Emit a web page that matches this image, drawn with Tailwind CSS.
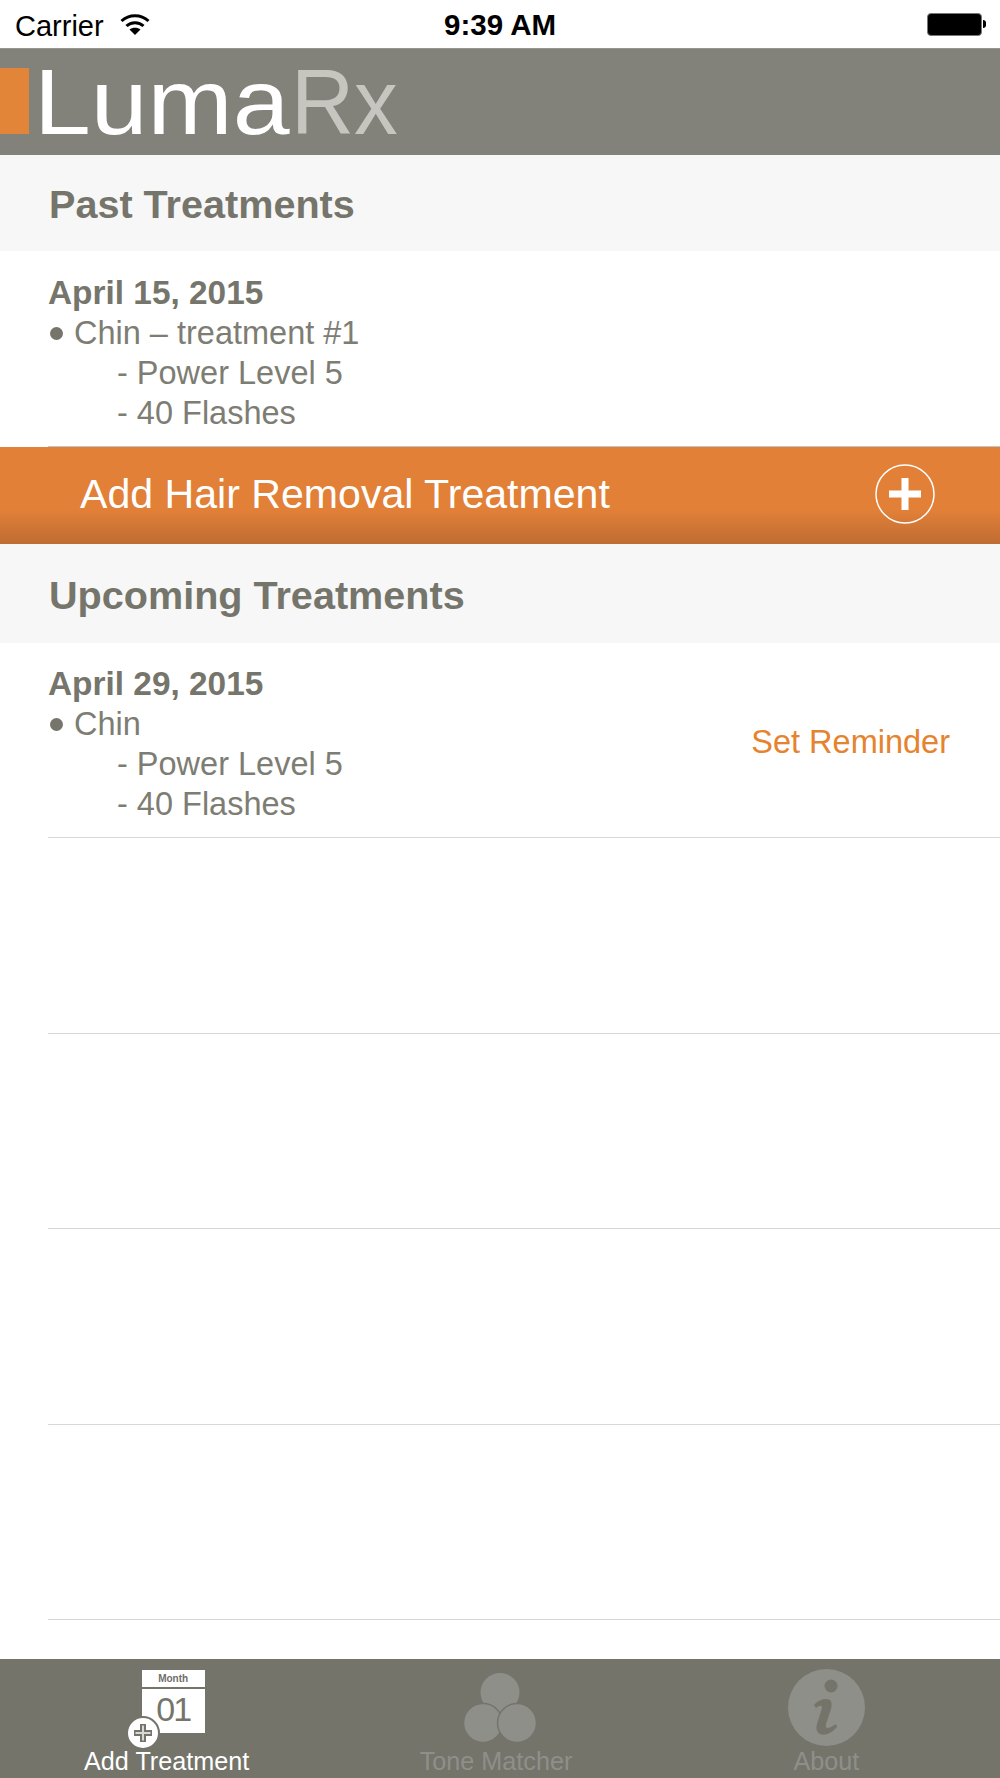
<!DOCTYPE html>
<html lang="en">
<head>
    <meta charset="UTF-8">
    <title>LumaRx</title>
    <script src="https://cdn.jsdelivr.net/npm/@tailwindcss/browser@4"></script>
</head>
<body class="bg-white font-['Liberation_Sans',sans-serif] text-[#7d7d74]">
<div class="w-[1000px] h-[1778px] flex flex-col overflow-hidden">

    <!-- status bar -->
    <div class="h-[48px] flex items-center justify-between relative text-black pl-[15px] pr-[14px]">
        <div class="flex items-center gap-[16px]">
            <span class="text-[29px] leading-[34px] mt-[4px]">Carrier</span>
            <svg width="30" height="23" viewBox="0 0 30 23">
                <path d="M1.5 8 C9 1 21 1 28.5 8" fill="none" stroke="black" stroke-width="3"/>
                <path d="M6.5 13 C11 8.5 19 8.5 23.5 13" fill="none" stroke="black" stroke-width="3"/>
                <path d="M9.5 16.5 C12.5 14 17.5 14 20.5 16.5 L15 22 Z" fill="black"/>
            </svg>
        </div>
        <span class="absolute left-[444px] top-[8px] text-[29.5px] leading-[34px] font-bold">9:39 AM</span>
        <div class="flex items-center gap-[1px]">
            <div class="w-[55px] h-[23px] bg-black border-[1.5px] border-[#777] rounded-[4px]"></div>
            <div class="w-[3px] h-[8px] bg-black rounded-r-full"></div>
        </div>
    </div>

    <!-- logo header -->
    <div class="h-[107px] bg-[#82827a] border-t border-[#96968e] flex items-start">
        <div class="w-[29px] h-[66px] bg-[#e38539] mt-[19px]"></div>
        <div class="ml-[5px] mt-[7px] flex text-[92px] leading-none">
            <span class="block w-[257px] origin-left scale-x-[1.11] text-white">Luma</span>
            <span class="block origin-left scale-x-[0.95] text-[#c6c5bf]">Rx</span>
        </div>
    </div>

    <!-- past -->
    <div class="h-[96px] bg-[#f7f7f7] flex items-center pl-[49px] pt-[3px] text-[39.6px] font-bold text-[#75756b]">Past Treatments</div>
    <div class="h-[196px] ml-[48px] pt-[22px] text-[32.5px] leading-[40px] border-b border-[#c4c4c4]">
        <div class="font-bold text-[33.4px] text-[#75756b]">April 15, 2015</div>
        <div class="flex items-center"><span class="w-[13px] h-[13px] rounded-full bg-[#75756b] ml-[2px] mr-[11px]"></span><span>Chin – treatment #1</span></div>
        <div class="pl-[69px]">- Power Level 5</div>
        <div class="pl-[69px]">- 40 Flashes</div>
    </div>

    <!-- add button -->
    <div class="h-[97px] shrink-0 bg-linear-to-b from-[#e28038] from-65% to-[#bf6c33] flex items-center justify-between pl-[80px] pr-[65px] text-white text-[41.1px]">
        <span class="-mt-[2px]">Add Hair Removal Treatment</span>
        <svg class="-mt-[3px]" width="60" height="60" viewBox="0 0 60 60">
            <circle cx="30" cy="30" r="29" fill="none" stroke="white" stroke-width="1.5"/>
            <path d="M30 14 V46 M14 30 H46" stroke="white" stroke-width="7"/>
        </svg>
    </div>

    <!-- upcoming -->
    <div class="h-[99px] bg-[#f7f7f7] flex items-center pl-[49px] pt-[4px] text-[39.6px] font-bold text-[#75756b]">Upcoming Treatments</div>
    <div class="h-[195px] shrink-0 ml-[48px] pt-[21px] text-[32.5px] leading-[40px] border-b border-[#d8d8d8] flex justify-between">
        <div>
            <div class="font-bold text-[33.4px] text-[#75756b]">April 29, 2015</div>
            <div class="flex items-center"><span class="w-[13px] h-[13px] rounded-full bg-[#75756b] ml-[2px] mr-[11px]"></span><span>Chin</span></div>
            <div class="pl-[69px]">- Power Level 5</div>
            <div class="pl-[69px]">- 40 Flashes</div>
        </div>
        <div class="text-[#e5832e] mr-[50px] mt-[58px]">Set Reminder</div>
    </div>

    <!-- empty rows -->
    <div class="h-[195.5px] shrink-0 ml-[48px] border-b border-[#d8d8d8]"></div>
    <div class="h-[195.5px] shrink-0 ml-[48px] border-b border-[#d8d8d8]"></div>
    <div class="h-[195.5px] shrink-0 ml-[48px] border-b border-[#d8d8d8]"></div>
    <div class="h-[195.5px] shrink-0 ml-[48px] border-b border-[#d8d8d8]"></div>
    <div class="flex-1"></div>

    <!-- tab bar -->
    <div class="h-[119px] shrink-0 bg-[#74746a] grid grid-cols-3 text-[25.2px] text-[#8f8f8a] text-center">
        <div class="flex flex-col items-center text-white">
            <div class="h-[87px] pt-[11px]">
                <div class="relative w-[63px] ml-[13px]">
                    <div class="h-[17px] bg-white text-[10px] leading-[17px] font-bold text-[#6f6f67]">Month</div>
                    <div class="mt-[2px] h-[44px] bg-white text-[34px] leading-[40px] tracking-[-2px] text-[#75756b]">01</div>
                    <div class="absolute -left-[15px] top-[47px] w-[30px] h-[30px] rounded-full bg-white border-2 border-[#74746a] box-content -m-[1px] flex items-center justify-center">
                        <svg width="22" height="22" viewBox="0 0 22 22">
                            <path d="M11 2 V20 M2 11 H20" stroke="#74746a" stroke-width="6"/>
                            <path d="M11 3.5 V18.5 M3.5 11 H18.5" stroke="#d8d8d4" stroke-width="2"/>
                        </svg>
                    </div>
                </div>
            </div>
            <span class="leading-[30px]">Add Treatment</span>
        </div>
        <div class="flex flex-col items-center">
            <div class="h-[87px] pt-[14px]">
                <svg width="74" height="70" viewBox="0 0 74 70">
                    <circle cx="37" cy="19.5" r="19.5" fill="#8f8f8a"/>
                    <circle cx="20" cy="50" r="19.5" fill="#8f8f8a" stroke="#74746a" stroke-width="1.5"/>
                    <circle cx="54" cy="50" r="19.5" fill="#8f8f8a" stroke="#74746a" stroke-width="1.5"/>
                </svg>
            </div>
            <span class="leading-[30px] pr-[8px]">Tone Matcher</span>
        </div>
        <div class="flex flex-col items-center pr-[14px]">
            <div class="h-[87px] pt-[10px]">
                <svg width="77" height="77" viewBox="0 0 77 77">
                    <circle cx="38.5" cy="38.5" r="38.5" fill="#8f8f8a"/>
                    <circle cx="43" cy="17" r="6.5" fill="#74746a"/>
                    <path d="M26 36 C31 30 38 29 42 31 C44 33 44 36 43 40 L38 55 C37 59 39 60 43 58 L48 55 L49 58 C43 65 36 67 32 65 C28 63 28 59 29 55 L34 39 C34 36 32 36 28 39 Z" fill="#74746a"/>
                </svg>
            </div>
            <span class="leading-[30px]">About</span>
        </div>
    </div>
</div>
</body>
</html>
